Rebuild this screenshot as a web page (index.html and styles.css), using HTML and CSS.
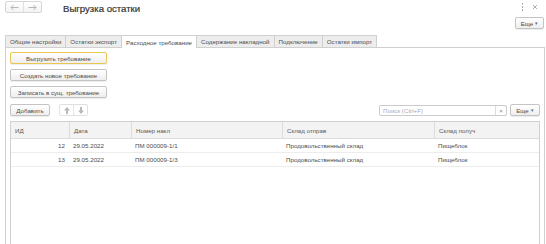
FILE: index.html
```html
<!DOCTYPE html>
<html lang="ru">
<head>
    <meta charset="UTF-8">
    <title>Выгрузка остатки</title>
    <link rel="stylesheet" href="styles.css">
</head>
<body>

    <div class="header">
        <div class="nav">
            <span class="nav-btn">
                <svg width="9" height="7" viewBox="0 0 9 7"><path d="M8.5 3.5H1M3.5 1L1 3.5L3.5 6" fill="none" stroke="#a5a5a5" stroke-width="0.8"/></svg>
            </span>
            <span class="nav-btn">
                <svg width="9" height="7" viewBox="0 0 9 7"><path d="M0.5 3.5H8M5.5 1L8 3.5L5.5 6" fill="none" stroke="#a5a5a5" stroke-width="0.8"/></svg>
            </span>
        </div>
        <div class="title">Выгрузка остатки</div>
        <div class="win-icons">
            <svg width="3" height="8" viewBox="0 0 3 8"><rect x="1" y="0" width="1" height="1.6" fill="#999"/><rect x="1" y="3.2" width="1" height="1.6" fill="#999"/><rect x="1" y="6.4" width="1" height="1.6" fill="#999"/></svg>
            <svg width="6" height="6" viewBox="0 0 6 6"><path d="M1 1L5 5M5 1L1 5" stroke="#999" stroke-width="0.8"/></svg>
        </div>
    </div>

    <div class="form-bar">
        <span class="btn more-btn">Еще <span class="caret">▾</span></span>
    </div>

    <div class="tabs">
        <span class="tab">Общие настройки</span>
        <span class="tab">Остатки экспорт</span>
        <span class="tab active">Расходное требование</span>
        <span class="tab">Содержание накладной</span>
        <span class="tab">Подключение</span>
        <span class="tab">Остатки импорт</span>
    </div>

    <div class="panel">
        <div class="actions">
            <span class="btn wide focused">Выгрузить требование</span>
            <span class="btn wide">Создать новое требование</span>
            <span class="btn wide">Записать в сущ. требование</span>
        </div>

        <div class="list-bar">
            <span class="btn add-btn">Добавить</span>
            <span class="arrows">
                <span class="arrow">
                    <svg width="6" height="7" viewBox="0 0 6 7"><path d="M3 0L6 3.5H4V7H2V3.5H0Z" fill="#b8b8b8"/></svg>
                </span>
                <span class="arrow">
                    <svg width="6" height="7" viewBox="0 0 6 7"><path d="M3 7L6 3.5H4V0H2V3.5H0Z" fill="#b8b8b8"/></svg>
                </span>
            </span>
            <span class="search">
                <span class="search-text">Поиск (Ctrl+F)</span>
                <span class="search-clear">×</span>
            </span>
            <span class="btn more-btn">Еще <span class="caret">▾</span></span>
        </div>

        <div class="grid">
            <div class="grid-row grid-head">
                <span class="col-id">ИД</span>
                <span class="col-date">Дата</span>
                <span class="col-num">Номер накл</span>
                <span class="col-from">Склад отправ</span>
                <span class="col-to">Склад получ</span>
            </div>
            <div class="grid-row">
                <span class="col-id num">12</span>
                <span class="col-date">29.05.2022</span>
                <span class="col-num">ПМ 000009-1/1</span>
                <span class="col-from">Продовольственный склад</span>
                <span class="col-to">Пищеблок</span>
            </div>
            <div class="grid-row">
                <span class="col-id num">13</span>
                <span class="col-date">29.05.2022</span>
                <span class="col-num">ПМ 000009-1/3</span>
                <span class="col-from">Продовольственный склад</span>
                <span class="col-to">Пищеблок</span>
            </div>
        </div>
    </div>

</body>
</html>
```

FILE: styles.css
```css
body {
    margin: 0;
    height: 244px;
    overflow: hidden;
    display: flex;
    flex-direction: column;
    font-family: "Liberation Sans", Arial, sans-serif;
    font-size: 6.2px;
    color: #4d4d4d;
    background: white;
}
.header {
    display: flex;
    align-items: flex-start;
    height: 15px;
    padding: 1px 2px 0 5px;
}
.nav {
    display: flex;
    border: 1px solid #d6d6d6;
    border-radius: 2px;
    background: linear-gradient(#fff, #f3f3f3);
}
.nav-btn {
    width: 17px;
    height: 10px;
    display: flex;
    align-items: center;
    justify-content: center;
}
.nav-btn + .nav-btn {
    border-left: 1px solid #e0e0e0;
}
.title {
    margin: 2px 0 0 21px;
    font-size: 9.6px;
    color: #333;
    -webkit-text-stroke: 0.2px #333;
}
.win-icons {
    margin-left: auto;
    display: flex;
    align-items: center;
    gap: 8px;
    padding: 2px 6px 0 0;
}
.form-bar {
    display: flex;
    justify-content: flex-end;
    padding: 1px 2px 0 0;
}
.btn {
    display: flex;
    align-items: center;
    justify-content: center;
    box-sizing: border-box;
    height: 12px;
    border: 1px solid #c4c4c4;
    border-radius: 2px;
    background: linear-gradient(#ffffff, #eeeeee);
    box-shadow: 0 1px 1px rgba(0, 0, 0, 0.08);
    color: #4d4d4d;
    white-space: nowrap;
}
.more-btn {
    width: 29px;
    gap: 2px;
}
.caret {
    font-size: 5px;
    color: #666;
}
.tabs {
    display: flex;
    margin: 6px 0 0 5px;
}
.tab {
    height: 11px;
    display: flex;
    align-items: center;
    padding: 0 4px;
    border: 1px solid #d0d0d0;
    border-bottom: none;
    background: #ededed;
    white-space: nowrap;
}
.tab + .tab {
    border-left: none;
}
.tab.active {
    background: white;
    height: 12px;
    margin-bottom: -1px;
    position: relative;
}
.panel {
    flex: 1;
    display: flex;
    flex-direction: column;
    margin: 0 1px 0 5px;
    border: 1px solid #d0d0d0;
    border-bottom: none;
    padding: 4px 4px 0 4px;
}
.actions {
    display: flex;
    flex-direction: column;
    align-items: flex-start;
    gap: 5px;
}
.wide {
    width: 97px;
}
.focused {
    border-color: #e8c84e;
}
.list-bar {
    display: flex;
    align-items: center;
    margin-top: 6px;
}
.add-btn {
    width: 40px;
}
.arrows {
    display: flex;
    margin-left: 9px;
    border: 1px solid #e0e0e0;
    border-radius: 2px;
}
.arrow {
    width: 13px;
    height: 10px;
    display: flex;
    align-items: center;
    justify-content: center;
}
.arrow + .arrow {
    border-left: 1px solid #e6e6e6;
}
.search {
    margin-left: auto;
    display: flex;
    width: 128px;
    height: 11px;
    box-sizing: border-box;
    border: 1px solid #cbcbcb;
    border-radius: 2px;
}
.search-text {
    flex: 1;
    padding-left: 3px;
    color: #aab;
    display: flex;
    align-items: center;
}
.search-clear {
    width: 10px;
    border-left: 1px solid #ddd;
    display: flex;
    align-items: center;
    justify-content: center;
    color: #888;
}
.list-bar .more-btn {
    margin-left: 3px;
    width: 30px;
}
.grid {
    flex: 1;
    margin-top: 5px;
    border: 1px solid #d0d0d0;
    border-bottom: none;
}
.grid-row {
    display: flex;
    height: 13px;
    align-items: center;
    border-bottom: 1px solid #ededed;
}
.grid-head {
    height: 16px;
    background: #f3f3f3;
    border-bottom: 1px solid #dcdcdc;
    color: #595959;
}
.grid-row span {
    box-sizing: border-box;
    padding-left: 4px;
    white-space: nowrap;
}
.grid-head span {
    height: 100%;
    display: flex;
    align-items: center;
}
.grid-head span + span {
    border-left: 1px solid #dcdcdc;
}
.col-id { width: 58px; }
.col-date { width: 62px; }
.col-num { width: 151px; }
.col-from { width: 152px; }
.col-to { flex: 1; }
.num {
    text-align: right;
    padding-right: 4px;
}
```
